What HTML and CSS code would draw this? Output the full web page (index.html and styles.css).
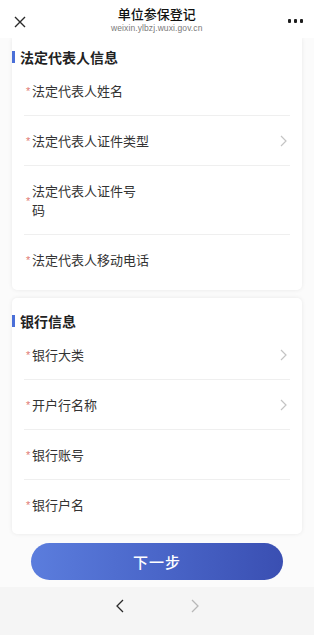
FILE: index.html
```html
<!DOCTYPE html>
<html lang="zh-CN">
<head>
<meta charset="utf-8">
<title>单位参保登记</title>
<link rel="stylesheet" href="styles.css">
</head>
<body>
<div class="app">
  <header class="topbar">
    <span class="topbar__close">
      <svg width="12" height="12" viewBox="0 0 12 12"><path d="M1 1L11 11M11 1L1 11" stroke="#2a2a2a" stroke-width="1.4" fill="none"/></svg>
    </span>
    <div class="topbar__titles">
      <div class="topbar__title">单位参保登记</div>
      <div class="topbar__url">weixin.ylbzj.wuxi.gov.cn</div>
    </div>
    <span class="topbar__more"><i></i><i></i><i></i></span>
  </header>

  <main class="content">
    <section class="card card--clipped">
      <h2 class="card__title">法定代表人信息</h2>
      <div class="row"><span class="row__star">*</span><span class="row__label">法定代表人姓名</span></div>
      <div class="row"><span class="row__star">*</span><span class="row__label">法定代表人证件类型</span><span class="row__arrow"><svg width="7" height="12" viewBox="0 0 7 12"><path d="M1 1L6 6L1 11" stroke="#c4c4c4" stroke-width="1.2" fill="none"/></svg></span></div>
      <div class="row"><span class="row__star">*</span><span class="row__label row__label--narrow">法定代表人证件号码</span></div>
      <div class="row"><span class="row__star">*</span><span class="row__label">法定代表人移动电话</span></div>
    </section>

    <section class="card">
      <h2 class="card__title">银行信息</h2>
      <div class="row"><span class="row__star">*</span><span class="row__label">银行大类</span><span class="row__arrow"><svg width="7" height="12" viewBox="0 0 7 12"><path d="M1 1L6 6L1 11" stroke="#c4c4c4" stroke-width="1.2" fill="none"/></svg></span></div>
      <div class="row"><span class="row__star">*</span><span class="row__label">开户行名称</span><span class="row__arrow"><svg width="7" height="12" viewBox="0 0 7 12"><path d="M1 1L6 6L1 11" stroke="#c4c4c4" stroke-width="1.2" fill="none"/></svg></span></div>
      <div class="row"><span class="row__star">*</span><span class="row__label">银行账号</span></div>
      <div class="row"><span class="row__star">*</span><span class="row__label">银行户名</span></div>
    </section>

    <div class="actions"><button class="btn-next">下一步</button></div>
  </main>

  <footer class="navbar">
    <svg width="8" height="14" viewBox="0 0 8 14"><path d="M7 1L1 7L7 13" stroke="#2a2a2a" stroke-width="1.3" fill="none"/></svg>
    <svg width="8" height="14" viewBox="0 0 8 14"><path d="M1 1L7 7L1 13" stroke="#b8b8b8" stroke-width="1.3" fill="none"/></svg>
  </footer>
</div>
</body>
</html>
```

FILE: styles.css
```css
* { box-sizing: border-box; margin: 0; padding: 0; }
html, body { width: 314px; height: 635px; overflow: hidden; }
body {
  font-family: "Noto Sans CJK SC", "Noto Sans", sans-serif;
  background: #fbfbfb;
  color: #333;
}
.app { display: flex; flex-direction: column; height: 635px; }

.topbar {
  height: 38px;
  background: #fff;
  display: flex;
  align-items: center;
  justify-content: space-between;
  padding: 0 11px 0 14px;
  position: relative;
  z-index: 2;
}
.topbar__close { width: 12px; height: 12px; display: flex; margin-top: 6px; }
.topbar__titles { text-align: center; margin-top: 1px; }
.topbar__title { font-size: 13px; line-height: 16px; font-weight: 500; color: #111; }
.topbar__url { font-size: 8.5px; line-height: 12px; color: #7a7a7a; font-family: "Liberation Sans", "Noto Sans", sans-serif; letter-spacing: 0.1px; }
.topbar__more { display: flex; gap: 2.5px; margin-top: 4px; }
.topbar__more i { width: 3.5px; height: 3.5px; border-radius: 1px; background: #1e1e1e; display: block; }

.content { flex: 1; padding: 0 12px; display: flex; flex-direction: column; }

.card {
  background: #fff;
  border-radius: 5px;
  box-shadow: 0 0 4px rgba(0, 0, 0, 0.08);
  padding: 14px 12px 5px 0;
  margin-top: 8px;
}
.card--clipped { margin-top: 0; padding-top: 10px; border-radius: 0 0 5px 5px; padding-bottom: 6px; }
.card__title {
  display: flex;
  align-items: center;
  font-size: 14px;
  line-height: 18px;
  font-weight: 700;
  color: #222;
}
.card__title::before {
  content: "";
  width: 3px;
  height: 12px;
  background: #4a6fd8;
  margin-right: 5px;
}

.row {
  margin-left: 12px;
  padding: 15px 0 15px 2px;
  display: flex;
  align-items: center;
  border-bottom: 1px solid #efefef;
  font-size: 13px;
  line-height: 19px;
  color: #333;
}
.card .row:last-child { border-bottom: none; }
.row__star { color: #e07a72; font-size: 11px; line-height: 11px; width: 6px; margin-top: 2px; font-family: "Liberation Sans", sans-serif; }
.row__label { flex: 1; }
.row__label--narrow { flex: 0 0 106px; }
.row__arrow { display: flex; margin-right: 3px; }

.actions { padding: 9px 19px 0; }
.btn-next {
  width: 252px;
  height: 37px;
  border: none;
  border-radius: 19px;
  background: linear-gradient(90deg, #5b7ddd 0%, #4a66c9 50%, #3a4fb2 100%);
  color: #fff;
  font-family: "Noto Sans CJK SC", sans-serif;
  font-size: 15px;
  font-weight: 500;
  letter-spacing: 1px;
  display: block;
}

.navbar {
  height: 48px;
  background: #f5f5f5;
  display: flex;
  justify-content: center;
  align-items: flex-start;
  gap: 67px;
  padding-top: 12px;
}
```
